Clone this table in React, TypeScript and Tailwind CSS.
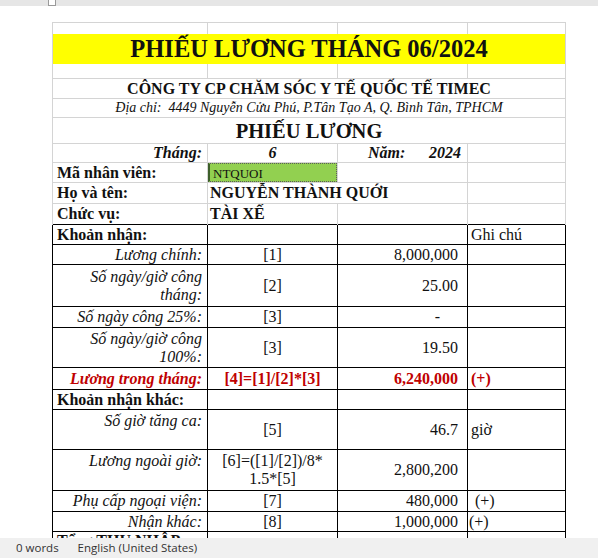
import React from 'react';

const gray = 'border-[#d4d4d4]';

function GrayRow({ h, children }: { h: string; children?: React.ReactNode }) {
  return <tr className={h}>{children}</tr>;
}

export default function App() {
  const rows = [
    { label: 'Lương chính:', code: '[1]', value: '8,000,000', note: '', h: 'h-[20px]' },
    { label: <>Số ngày/giờ công<br />tháng:</>, code: '[2]', value: '25.00', note: '', h: 'h-[42px]' },
    { label: 'Số ngày công 25%:', code: '[3]', value: '-', note: '', h: 'h-[21px]', dash: true },
    { label: <>Số ngày/giờ công<br />100%:</>, code: '[3]', value: '19.50', note: '', h: 'h-[40px]' },
  ];

  const others = [
    { label: 'Số giờ tăng ca:', code: <>[5]</>, value: '46.7', note: 'giờ', h: 'h-[40px]', top: true, noteCls: 'pl-[3px]' },
    { label: 'Lương ngoài giờ:', code: <>[6]=([1]/[2])/8*<br />1.5*[5]</>, value: '2,800,200', note: '', h: 'h-[41px]', top: true, noteCls: '' },
    { label: 'Phụ cấp ngoại viện:', code: <>[7]</>, value: '480,000', note: '(+)', h: 'h-[21px]', top: false, noteCls: 'pl-[7px]' },
    { label: 'Nhận khác:', code: <>[8]</>, value: '1,000,000', note: '(+)', h: 'h-[20px]', top: false, noteCls: 'pl-[1px]' },
  ];

  return (
    <div className="w-[598px] h-[558px] flex flex-col bg-white overflow-hidden">
      {/* top ruler strip */}
      <div className="h-[6px] shrink-0 bg-[#e6e6e6] pl-[48px]">
        <div className="w-[8px] h-[6px] bg-white border border-t-0 border-[#9a9a9a]" />
      </div>

      {/* sheet */}
      <div className="flex-1 min-h-0 overflow-hidden pt-[16px] pl-[52px]">
        <table className="table-fixed border-collapse w-[513px] font-['Liberation_Serif',serif] text-[16px] leading-[18px] text-[#111]">
          <colgroup>
            <col className="w-[155px]" />
            <col className="w-[130px]" />
            <col className="w-[130px]" />
            <col className="w-[98px]" />
          </colgroup>
          <tbody>
            <GrayRow h="h-[11px]">
              <td className={`border-t border-x ${gray}`} />
              <td className={`border-t border-x ${gray}`} />
              <td className={`border-t border-x ${gray}`} />
              <td className={`border-t border-x ${gray}`} />
            </GrayRow>
            <GrayRow h="h-[30px]">
              <td colSpan={4} className={`border-x ${gray} bg-[#ffff00] text-center font-bold text-[24.5px] leading-[28px]`}>
                PHIẾU LƯƠNG THÁNG 06/2024
              </td>
            </GrayRow>
            <GrayRow h="h-[15px]">
              <td className={`border-x ${gray}`} />
              <td className={`border-x ${gray}`} />
              <td className={`border-x ${gray}`} />
              <td className={`border-x ${gray}`} />
            </GrayRow>
            <GrayRow h="h-[20px]">
              <td colSpan={4} className={`border-t border-x ${gray} text-center font-bold text-[16px]`}>
                CÔNG TY CP CHĂM SÓC Y TẾ QUỐC TẾ TIMEC
              </td>
            </GrayRow>
            <GrayRow h="h-[19px]">
              <td colSpan={4} className={`border-t border-x ${gray} text-center italic text-[14px] leading-[16px]`}>
                Địa chỉ:&nbsp; 4449 Nguyễn Cửu Phú, P.Tân Tạo A, Q. Bình Tân, TPHCM
              </td>
            </GrayRow>
            <GrayRow h="h-[26px]">
              <td colSpan={4} className={`border-t border-x ${gray} text-center font-bold text-[20.5px] leading-[24px]`}>
                PHIẾU LƯƠNG
              </td>
            </GrayRow>
            <GrayRow h="h-[19px]">
              <td className={`border-t border-x ${gray} text-right pr-[5px] font-bold italic`}>Tháng:</td>
              <td className={`border-t border-x ${gray} text-center font-bold italic`}>6</td>
              <td className={`border-t border-x ${gray} font-bold italic`}>
                <div className="flex justify-between pl-[30px] pr-[6px]">
                  <span>Năm:</span>
                  <span>2024</span>
                </div>
              </td>
              <td className={`border-t border-x ${gray}`} />
            </GrayRow>
            <GrayRow h="h-[20px]">
              <td className={`border-t border-x ${gray} pl-[4px] font-bold`}>Mã nhân viên:</td>
              <td className={`border-t border-x ${gray} p-0`}>
                <div className="h-[19px] bg-[#92d050] border border-dotted border-[#5a5a5a] border-l-2 [border-left-style:solid] border-l-[#3d5f2a] pl-[3px] text-[13px] leading-[20px] font-normal">
                  NTQUOI
                </div>
              </td>
              <td className={`border-t border-x ${gray}`} />
              <td className={`border-t border-x ${gray}`} />
            </GrayRow>
            <GrayRow h="h-[21px]">
              <td className={`border-t border-x ${gray} pl-[4px] font-bold`}>Họ và tên:</td>
              <td colSpan={2} className={`border-t border-x ${gray} pl-[2px] font-bold whitespace-nowrap`}>
                NGUYỄN THÀNH QUỚI
              </td>
              <td className={`border-t border-x ${gray}`} />
            </GrayRow>
            <GrayRow h="h-[21px]">
              <td className={`border-t border-x ${gray} pl-[4px] font-bold`}>Chức vụ:</td>
              <td className={`border-t border-x ${gray} pl-[2px] font-bold`}>TÀI XẾ</td>
              <td className={`border-t border-x ${gray}`} />
              <td className={`border-t border-x ${gray}`} />
            </GrayRow>

            {/* bordered part */}
            <tr className="h-[20px]">
              <td className="border border-black pl-[4px] font-bold">Khoản nhận:</td>
              <td className="border border-black" />
              <td className="border border-black" />
              <td className="border border-black pl-[3px]">Ghi chú</td>
            </tr>
            {rows.map((r, i) => (
              <tr key={i} className={r.h}>
                <td className="border border-black text-right pr-[5px] italic">{r.label}</td>
                <td className="border border-black text-center">{r.code}</td>
                <td className={`border border-black text-right ${r.dash ? 'pr-[27px]' : 'pr-[9px]'}`}>{r.value}</td>
                <td className="border border-black pl-[3px]">{r.note}</td>
              </tr>
            ))}
            <tr className="h-[22px] text-[#c00000] font-bold">
              <td className="border border-black text-right pr-[5px] italic">Lương trong tháng:</td>
              <td className="border border-black text-center">[4]=[1]/[2]*[3]</td>
              <td className="border border-black text-right pr-[9px]">6,240,000</td>
              <td className="border border-black pl-[3px]">(+)</td>
            </tr>
            <tr className="h-[20px]">
              <td className="border border-black pl-[4px] font-bold">Khoản nhận khác:</td>
              <td className="border border-black" />
              <td className="border border-black" />
              <td className="border border-black" />
            </tr>
            {others.map((r, i) => (
              <tr key={i} className={r.h}>
                <td className={`border border-black text-right pr-[5px] italic ${r.top ? 'align-top pt-[2px]' : ''}`}>{r.label}</td>
                <td className="border border-black text-center whitespace-nowrap">{r.code}</td>
                <td className="border border-black text-right pr-[9px]">{r.value}</td>
                <td className={`border border-black ${r.noteCls}`}>{r.note}</td>
              </tr>
            ))}
            <tr className="h-[20px]">
              <td className="border border-black pl-[4px] font-bold align-top">Tổng THU NHẬP:</td>
              <td className="border border-black" />
              <td className="border border-black" />
              <td className="border border-black" />
            </tr>
          </tbody>
        </table>
      </div>

      {/* status bar */}
      <div className="h-[20px] shrink-0 bg-[#f0f0f0] flex items-center gap-[19px] pl-[16px] font-['Open_Sans',sans-serif] text-[11.5px] text-[#333]">
        <span>0 words</span>
        <span>English (United States)</span>
      </div>
    </div>
  );
}
